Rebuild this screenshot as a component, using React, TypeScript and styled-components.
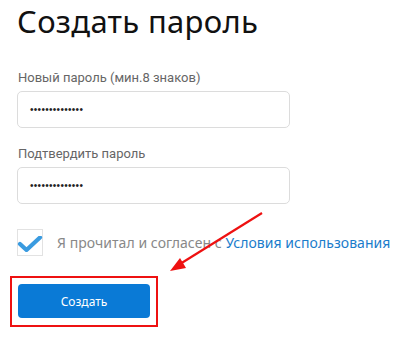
import React from 'react';
import styled, { createGlobalStyle } from 'styled-components';

const GlobalStyle = createGlobalStyle`
  html, body {
    margin: 0;
    padding: 0;
    background: #ffffff;
  }
  body {
    font-family: 'Noto Sans', sans-serif;
  }
`;

const Page = styled.div`
  position: relative;
  width: 400px;
  height: 349px;
  overflow: hidden;
  padding: 0 0 0 17px;
  box-sizing: border-box;
`;

const Title = styled.h1`
  margin: 0;
  padding-top: 0;
  font-family: 'Noto Sans', sans-serif;
  font-weight: 400;
  font-size: 31px;
  line-height: 42px;
  color: #111111;
  letter-spacing: 0.3px;
`;

const Field = styled.div<{ $top: number }>`
  display: flex;
  flex-direction: column;
  margin-top: ${(p) => p.$top}px;
  width: 273px;
`;

const Label = styled.label`
  font-family: Roboto, 'Liberation Sans', sans-serif;
  font-size: 13px;
  line-height: 15px;
  color: #666666;
  margin-left: 1px;
`;

const Input = styled.div`
  margin-top: 6px;
  height: 37px;
  box-sizing: border-box;
  border: 1px solid #dcdcdc;
  border-radius: 5px;
  display: flex;
  align-items: center;
  padding-left: 12px;
  font-family: 'Liberation Sans', sans-serif;
  font-size: 10px;
  letter-spacing: 0.3px;
  color: #222222;
`;

const AgreeRow = styled.div`
  display: flex;
  align-items: center;
  margin-top: 25px;
  gap: 14px;
`;

const CheckBox = styled.div`
  position: relative;
  width: 26px;
  height: 27px;
  box-sizing: border-box;
  border: 1px solid #e2e2e2;
  flex-shrink: 0;
`;

const Check = styled.svg`
  position: absolute;
  left: -1px;
  top: 6px;
`;

const AgreeText = styled.span`
  font-family: 'Noto Sans', sans-serif;
  font-size: 14px;
  color: #888888;
  white-space: nowrap;
  letter-spacing: 0.05px;
`;

const Link = styled.a`
  color: #1a7ccb;
  text-decoration: none;
`;

const Highlight = styled.div`
  margin-top: 20px;
  margin-left: -7px;
  width: 148px;
  height: 51px;
  box-sizing: border-box;
  border: 2.5px solid #ee1111;
  padding: 6px 0 0 6px;
`;

const Button = styled.button`
  width: 132px;
  height: 34px;
  border: none;
  border-radius: 4px;
  background: #0a7ad6;
  color: #ffffff;
  font-family: 'Noto Sans', sans-serif;
  font-size: 12px;
  cursor: pointer;
  padding: 0;
`;

const Arrow = styled.svg`
  position: absolute;
  left: 0;
  top: 0;
  pointer-events: none;
`;

export default function App() {
  return (
    <>
      <GlobalStyle />
      <Page>
        <Title>Создать пароль</Title>
        <Field $top={28}>
          <Label>Новый пароль (мин.8 знаков)</Label>
          <Input>••••••••••••••</Input>
        </Field>
        <Field $top={18}>
          <Label>Подтвердить пароль</Label>
          <Input>••••••••••••••</Input>
        </Field>
        <AgreeRow>
          <CheckBox>
            <Check width="26" height="16" viewBox="0 0 26 16">
              <path d="M3 8 L9.5 14 L23 1.5" fill="none" stroke="#3a9be0" strokeWidth="4.2" strokeLinecap="round" strokeLinejoin="round" />
            </Check>
          </CheckBox>
          <AgreeText>
            Я прочитал и согласен с <Link>Условия использования</Link>
          </AgreeText>
        </AgreeRow>
        <Highlight>
          <Button>Создать</Button>
        </Highlight>
        <Arrow width="400" height="349" viewBox="0 0 400 349">
          <line x1="262" y1="213" x2="180" y2="264" stroke="#ee1111" strokeWidth="2.2" />
          <polygon points="170,271 180,258 186,268" fill="#ee1111" />
        </Arrow>
      </Page>
    </>
  );
}
